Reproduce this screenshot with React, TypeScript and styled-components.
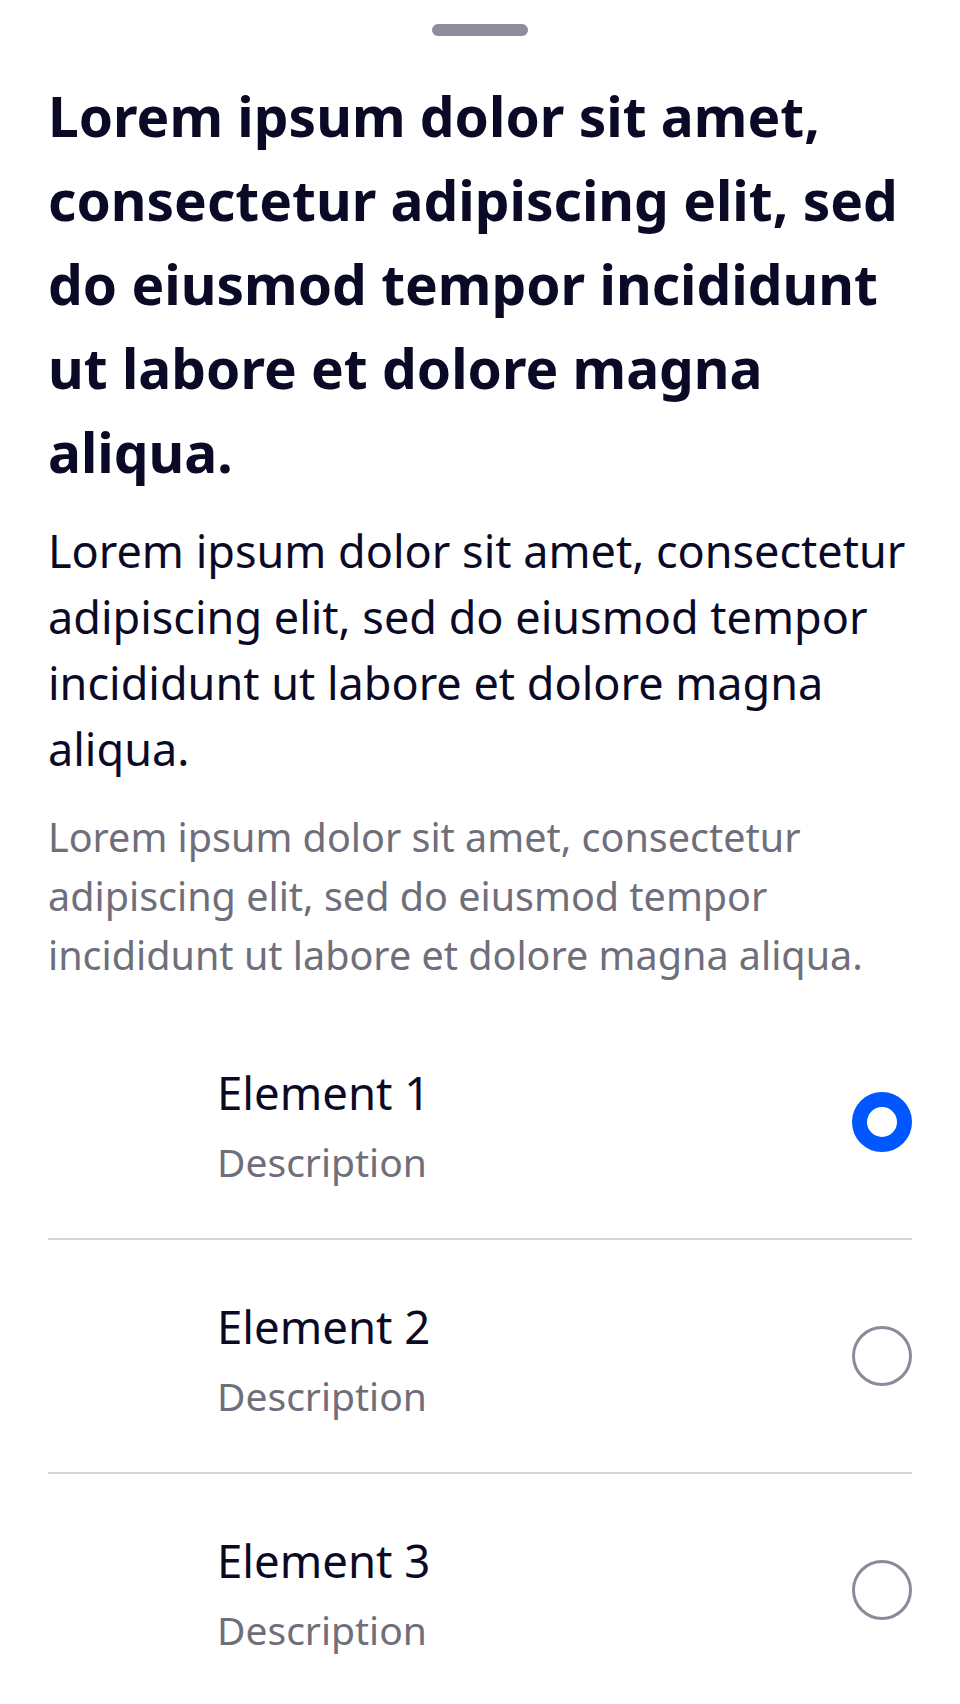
import React, { useState } from "react";
import styled, { createGlobalStyle } from "styled-components";

const GlobalStyle = createGlobalStyle`
  html, body {
    margin: 0;
    padding: 0;
    background: #ffffff;
  }
  body {
    font-family: "Noto Sans", "Open Sans", sans-serif;
    color: #0b0a26;
  }
  * {
    box-sizing: border-box;
  }
`;

const Sheet = styled.div`
  display: flex;
  flex-direction: column;
  padding: 24px 48px 0;
  min-height: 1704px;
`;

const Handle = styled.div`
  align-self: center;
  width: 96px;
  height: 12px;
  border-radius: 6px;
  background: #8e8d9c;
  margin-bottom: 38px;
`;

const Title = styled.h1`
  margin: 0 0 24px;
  font-size: 55px;
  line-height: 84px;
  font-weight: 700;
  color: #0b0a26;
`;

const Body = styled.p`
  margin: 0 0 26px;
  font-size: 45px;
  line-height: 66px;
  color: #0b0a26;
`;

const Caption = styled.p`
  margin: 0 0 21px;
  font-size: 39.5px;
  line-height: 59px;
  color: #6f6e7b;
`;

const List = styled.ul`
  list-style: none;
  margin: 0;
  padding: 0;
`;

const Row = styled.li<{ last?: boolean }>`
  display: flex;
  align-items: center;
  padding: 46px 0;
  border-bottom: ${(p) => (p.last ? "none" : "2px solid #d6d6db")};
  cursor: pointer;
`;

const Leading = styled.div`
  width: 169px;
  flex-shrink: 0;
`;

const Texts = styled.div`
  flex-grow: 1;
  display: flex;
  flex-direction: column;
`;

const Label = styled.span`
  font-size: 45.5px;
  line-height: 80px;
  color: #0b0a26;
`;

const Description = styled.span`
  font-size: 39px;
  line-height: 60px;
  color: #6f6e7b;
`;

const Radio = styled.span<{ selected?: boolean }>`
  width: 60px;
  height: 60px;
  flex-shrink: 0;
  border-radius: 50%;
  border: ${(p) => (p.selected ? "15px solid #0057ff" : "3px solid #8c8a99")};
  background: #ffffff;
`;

const text =
  "Lorem ipsum dolor sit amet, consectetur adipiscing elit, sed do eiusmod tempor incididunt ut labore et dolore magna aliqua.";

const items = ["Element 1", "Element 2", "Element 3"];

const App = () => {
  const [selected, setSelected] = useState(0);

  return (
    <>
      <GlobalStyle />
      <Sheet>
        <Handle />
        <Title>{text}</Title>
        <Body>{text}</Body>
        <Caption>{text}</Caption>
        <List>
          {items.map((item, i) => (
            <Row key={item} last={i === items.length - 1} onClick={() => setSelected(i)}>
              <Leading />
              <Texts>
                <Label>{item}</Label>
                <Description>Description</Description>
              </Texts>
              <Radio selected={selected === i} />
            </Row>
          ))}
        </List>
      </Sheet>
    </>
  );
};

export default App;
